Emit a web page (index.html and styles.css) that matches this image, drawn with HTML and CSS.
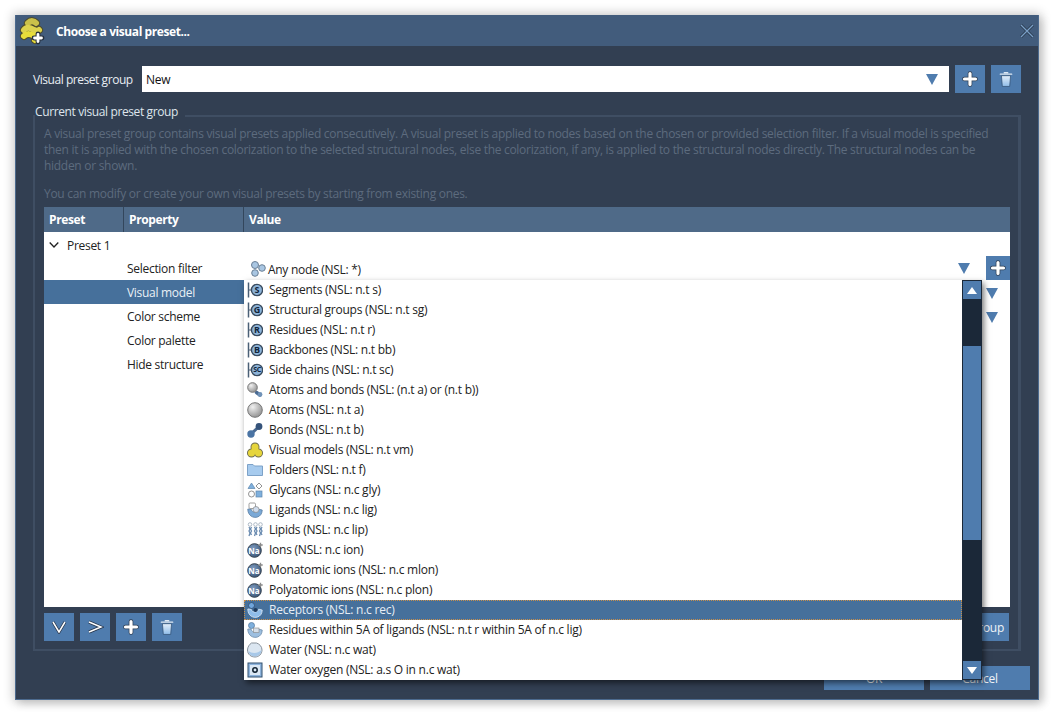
FILE: index.html
```html
<!DOCTYPE html>
<html lang="en">
<head>
<meta charset="utf-8">
<title>Choose a visual preset...</title>
<link rel="stylesheet" href="styles.css">
</head>
<body>
<svg class="defs" width="0" height="0" aria-hidden="true">
  <defs>
    <linearGradient id="trashG" x1="0" y1="0" x2="0" y2="1"><stop offset="0" stop-color="#e4effa"/><stop offset="1" stop-color="#8fbce8"/></linearGradient>
    <radialGradient id="ball" cx=".35" cy=".3" r=".8"><stop offset="0" stop-color="#f0f0f0"/><stop offset="1" stop-color="#8a8a8a"/></radialGradient>
    <radialGradient id="na" cx=".4" cy=".35" r=".8"><stop offset="0" stop-color="#7f9cc0"/><stop offset="1" stop-color="#2f4a6b"/></radialGradient>
    <symbol id="plus" viewBox="0 0 16 16"><path d="M8 2.500v11M2.500 8h11" stroke="#2d3c50" stroke-width="4.600" stroke-linecap="round"/><path d="M8 2.500v11M2.500 8h11" stroke="#fff" stroke-width="3.200" stroke-linecap="round"/></symbol>
    <symbol id="trash" viewBox="0 0 16 20"><path d="M1.500 4.500h13M6 2.800h4" stroke="#dfe9f3" stroke-width="1.500" stroke-linecap="round"/><path d="M2.800 6.200h10.400l-1 12.300H3.800z" fill="url(#trashG)" stroke="#2d4a6e" stroke-width=".8"/></symbol>
    <symbol id="ring" viewBox="0 0 16 16"><path d="M1.500 .5v15" stroke="#4a5f75" stroke-width="1.500"/><path d="M2 8h3" stroke="#4a5f75"/><circle cx="10" cy="8" r="5.600" fill="#8db3d8" stroke="#3a4c60" stroke-width="1.400"/></symbol>
    <symbol id="any" viewBox="0 0 16 16"><circle cx="5" cy="4" r="3.500" fill="#a9c6e2" stroke="#6a7f95"/><circle cx="12" cy="7" r="3.300" fill="#a9c6e2" stroke="#6a7f95"/><circle cx="5" cy="12" r="3.300" fill="#a9c6e2" stroke="#6a7f95"/></symbol>
    <symbol id="atomsbonds" viewBox="0 0 16 16"><path d="M9.500 10.500l3.500 2.500" stroke="#4a6a92" stroke-width="3.500" stroke-linecap="round"/><circle cx="5.500" cy="5.500" r="4.800" fill="url(#ball)" stroke="#777"/><circle cx="13" cy="12.500" r="2.400" fill="#7092b8"/></symbol>
    <symbol id="atom" viewBox="0 0 16 16"><circle cx="8" cy="8" r="7.300" fill="url(#ball)" stroke="#777"/></symbol>
    <symbol id="bond" viewBox="0 0 16 16"><path d="M4 12L12 4.500" stroke="#4a6a92" stroke-width="3"/><circle cx="4" cy="12" r="3.700" fill="#4a74a4"/><circle cx="12" cy="4.500" r="3.400" fill="#35537a"/></symbol>
    <symbol id="vm" viewBox="0 0 16 16"><g stroke="#6b6b50" stroke-width="1.400"><circle cx="8" cy="5" r="3.800"/><circle cx="4.500" cy="11" r="3.800"/><circle cx="11.500" cy="11" r="3.800"/></g><g fill="#e6d53c"><circle cx="8" cy="5" r="3.600"/><circle cx="4.500" cy="11" r="3.600"/><circle cx="11.500" cy="11" r="3.600"/><path d="M5 6h6l2 5H3z"/></g></symbol>
    <symbol id="folder" viewBox="0 0 16 16"><path d="M.5 2.500h5.500l1.500 1.500h8v9.500H.5z" fill="#a7cbee" stroke="#7da2c8"/></symbol>
    <symbol id="gly" viewBox="0 0 16 16"><path d="M4.500 1L8 6.500H1z" fill="#7fb0dd" stroke="#5f87ad" stroke-width=".7"/><path d="M12 1l3 3-3 3-3-3z" fill="#fff" stroke="#777" stroke-width=".8"/><circle cx="4.500" cy="12" r="3" fill="#fff" stroke="#777" stroke-width=".8"/><rect x="9" y="9" width="6" height="6" fill="#7fb0dd" stroke="#5f87ad" stroke-width=".7"/></symbol>
    <symbol id="lig" viewBox="0 0 16 16"><path d="M.8 7c0 11 14.400 11 14.400 1l-3.500-.8c-.5 3.500-7 4-7.700-.2z" fill="#7ba9d6" stroke="#5a7da2" stroke-width=".8"/><rect x="2" y="1" width="6.500" height="5.500" rx="1.200" fill="#fff" stroke="#888" stroke-width=".8"/><circle cx="9" cy="7.500" r="3" fill="#cfdced" stroke="#888" stroke-width=".7"/></symbol>
    <symbol id="lip" viewBox="0 0 16 16"><g fill="none" stroke="#a6b2c0" stroke-width=".9"><circle cx="3" cy="2.500" r="1.800"/><circle cx="8.500" cy="2.500" r="1.800"/><circle cx="13.500" cy="2.500" r="1.800"/></g><g fill="none" stroke="#6a8bb0" stroke-width="1.300"><path d="M2 5l1 2-1 2 1 2-1 3M4.500 5l-1 2 1 2-1 2 1 2"/><path d="M7.500 5l1 2-1 2 1 2-1 3M10 5l-1 2 1 2-1 2 1 2"/><path d="M12.500 5l1 2-1 2 1 2-1 3M15 5l-1 2 1 2-1 2 1 2"/></g></symbol>
    <symbol id="ion" viewBox="0 0 16 16"><circle cx="7.500" cy="8.500" r="6.800" fill="url(#na)" stroke="#33404f"/><path d="M13.500 .8v4.400M11.300 3h4.400" stroke="#8a8a8a" stroke-width="1.300"/></symbol>
    <symbol id="rec" viewBox="0 0 16 16"><path d="M.8 7c0 11 14.400 11 14.400 1l-3.500-.8c-.5 3.500-7 4-7.700-.2z" fill="#8fbdea" stroke="#dfeaf6" stroke-width=".8"/><circle cx="4.500" cy="3.500" r="3" fill="#6fa5dc" stroke="#2d4a6e" stroke-width=".8"/><circle cx="8.500" cy="8" r="2" fill="#1f3a5c"/></symbol>
    <symbol id="within" viewBox="0 0 16 16"><path d="M.8 7c0 11 14.400 11 14.400 1l-3.500-.8c-.5 3.500-7 4-7.700-.2z" fill="#9dbfe0" stroke="#6d8caa" stroke-width=".8"/><circle cx="4.500" cy="3.500" r="3" fill="#7fb0dd" stroke="#5a7da2" stroke-width=".8"/><rect x="6.500" y="6" width="5.500" height="4.500" fill="#d5dfea" stroke="#888" stroke-width=".6"/></symbol>
    <symbol id="water" viewBox="0 0 16 16"><path d="M4.500 1h5c3 1 5.500 3.500 5.500 7 0 4-3.200 7-7 7s-7.500-2.500-7.500-7C.5 5 2.500 2.200 4.500 1z" fill="#dbe6f1" stroke="#88919b"/><path d="M1.500 9c3 2.500 9 3 13 -1 0 3.500-3 6.300-6.500 6.300S1.800 12.500 1.500 9z" fill="#a8c8e8"/></symbol>
    <symbol id="oxy" viewBox="0 0 16 16"><rect x="1" y="1" width="14" height="14" fill="#8db3dc" stroke="#33516f"/><rect x="3" y="3" width="10" height="10" fill="#dbe8f5"/><circle cx="8" cy="8" r="2.200" fill="none" stroke="#10202f" stroke-width="1.500"/></symbol>
  </defs>
</svg>

<main class="window">
  <header class="titlebar">
    <svg class="logo" viewBox="0 0 28 28" aria-hidden="true">
      <g fill="none" stroke-linecap="round">
        <path d="M10 6c3-3 6-2 8 0" stroke="#4d4b2c" stroke-width="8"/>
        <path d="M6 13c3-4 7-2 10 0 2 1 4 1 5 0" stroke="#4d4b2c" stroke-width="8"/>
        <path d="M6 19c3-3 7-2 10 0 2 1 2 3 1 4" stroke="#4d4b2c" stroke-width="8"/>
        <path d="M10 6c3-3 6-2 8 0" stroke="#c9c04a" stroke-width="6"/>
        <path d="M6 13c3-4 7-2 10 0 2 1 4 1 5 0" stroke="#dcd24e" stroke-width="6"/>
        <path d="M6 19c3-3 7-2 10 0 2 1 2 3 1 4" stroke="#e8dd3a" stroke-width="6"/>
        <path d="M20 17v8M16 21h8" stroke="#26303e" stroke-width="4.800"/>
        <path d="M20 17.500v7M16.500 21h7" stroke="#fff" stroke-width="2.800"/>
      </g>
    </svg>
    <h1 class="title">Choose a visual preset...</h1>
    <svg class="close" viewBox="0 0 14 14" aria-hidden="true"><path d="M1 1l12 12M13 1L1 13" stroke="#263548" stroke-width="2.800"/><path d="M1 1l12 12M13 1L1 13" stroke="#7aa0c8" stroke-width="1.400"/></svg>
  </header>

  <div class="body">
    <div class="group-row">
      <span class="group-label">Visual preset group</span>
      <div class="combo"><span>New</span><i class="arrow"></i></div>
      <button class="btn icon-btn"><svg class="ic-plus"><use href="#plus"/></svg></button>
      <button class="btn icon-btn"><svg class="ic-trash"><use href="#trash"/></svg></button>
    </div>

    <fieldset class="panel">
      <legend>Current visual preset group</legend>
      <div class="desc">
        <p>A visual preset group contains visual presets applied consecutively. A visual preset is applied to nodes based on the chosen or provided selection filter. If a visual model is specified<br>then it is applied with the chosen colorization to the selected structural nodes, else the colorization, if any, is applied to the structural nodes directly. The structural nodes can be<br>hidden or shown.</p>
        <p>You can modify or create your own visual presets by starting from existing ones.</p>
      </div>

      <div class="table">
        <div class="thead">
          <div class="th col-preset">Preset</div>
          <div class="th col-prop">Property</div>
          <div class="th col-val">Value</div>
        </div>
        <div class="tbody">
          <div class="tree-row"><svg class="chev" viewBox="0 0 10 6"><path d="M.7 .5l4.300 4.500 4.300-4.500" fill="none" stroke="#222" stroke-width="1.300"/></svg>Preset 1</div>
          <div class="prop-row first">
            <span class="prop">Selection filter</span>
            <span class="val"><svg class="ico any-ico"><use href="#any"/></svg>Any node (NSL: *)</span>
            <i class="arrow"></i>
            <button class="btn add-small"><svg class="ic-plus"><use href="#plus"/></svg></button>
          </div>
          <div class="prop-row"><span class="prop selected">Visual model</span><span class="val"></span><i class="arrow side"></i></div>
          <div class="prop-row"><span class="prop">Color scheme</span><span class="val"></span><i class="arrow side"></i></div>
          <div class="prop-row"><span class="prop">Color palette</span></div>
          <div class="prop-row"><span class="prop">Hide structure</span></div>
        </div>
      </div>

      <div class="toolbar">
        <button class="btn icon-btn"><svg class="ic-chev" viewBox="0 0 18 14"><path d="M3 2l6 10 6-10" fill="none" stroke="#26354a" stroke-width="3"/><path d="M3 2l6 10 6-10" fill="none" stroke="#fff" stroke-width="1.500"/></svg></button>
        <button class="btn icon-btn"><svg class="ic-chev" viewBox="0 0 18 14"><path d="M3 2l12 5-12 5" fill="none" stroke="#26354a" stroke-width="3"/><path d="M3 2l12 5-12 5" fill="none" stroke="#fff" stroke-width="1.500"/></svg></button>
        <button class="btn icon-btn"><svg class="ic-plus"><use href="#plus"/></svg></button>
        <button class="btn icon-btn"><svg class="ic-trash"><use href="#trash"/></svg></button>
        <button class="btn save-btn">Save as visual preset group</button>
      </div>
    </fieldset>

    <div class="actions">
      <button class="btn action">OK</button>
      <button class="btn action">Cancel</button>
    </div>
  </div>
</main>

<div class="popup">
  <ul class="list">
    <li><svg class="ico"><use href="#ring"/></svg><b class="glyph">S</b>Segments (NSL: n.t s)</li>
    <li><svg class="ico"><use href="#ring"/></svg><b class="glyph">G</b>Structural groups (NSL: n.t sg)</li>
    <li><svg class="ico"><use href="#ring"/></svg><b class="glyph">R</b>Residues (NSL: n.t r)</li>
    <li><svg class="ico"><use href="#ring"/></svg><b class="glyph">B</b>Backbones (NSL: n.t bb)</li>
    <li><svg class="ico"><use href="#ring"/></svg><b class="glyph sc">SC</b>Side chains (NSL: n.t sc)</li>
    <li><svg class="ico"><use href="#atomsbonds"/></svg>Atoms and bonds (NSL: (n.t a) or (n.t b))</li>
    <li><svg class="ico"><use href="#atom"/></svg>Atoms (NSL: n.t a)</li>
    <li><svg class="ico"><use href="#bond"/></svg>Bonds (NSL: n.t b)</li>
    <li><svg class="ico"><use href="#vm"/></svg>Visual models (NSL: n.t vm)</li>
    <li><svg class="ico"><use href="#folder"/></svg>Folders (NSL: n.t f)</li>
    <li><svg class="ico"><use href="#gly"/></svg>Glycans (NSL: n.c gly)</li>
    <li><svg class="ico"><use href="#lig"/></svg>Ligands (NSL: n.c lig)</li>
    <li><svg class="ico"><use href="#lip"/></svg>Lipids (NSL: n.c lip)</li>
    <li><svg class="ico"><use href="#ion"/></svg><b class="glyph na">Na</b>Ions (NSL: n.c ion)</li>
    <li><svg class="ico"><use href="#ion"/></svg><b class="glyph na">Na</b>Monatomic ions (NSL: n.c mlon)</li>
    <li><svg class="ico"><use href="#ion"/></svg><b class="glyph na">Na</b>Polyatomic ions (NSL: n.c plon)</li>
    <li class="current"><svg class="ico"><use href="#rec"/></svg>Receptors (NSL: n.c rec)</li>
    <li><svg class="ico"><use href="#within"/></svg>Residues within 5A of ligands (NSL: n.t r within 5A of n.c lig)</li>
    <li><svg class="ico"><use href="#water"/></svg>Water (NSL: n.c wat)</li>
    <li><svg class="ico"><use href="#oxy"/></svg>Water oxygen (NSL: a.s O in n.c wat)</li>
  </ul>
  <div class="scrollbar">
    <div class="sb-btn"><i class="tri up"></i></div>
    <div class="sb-track"><div class="sb-thumb"></div></div>
    <div class="sb-btn"><i class="tri down"></i></div>
  </div>
</div>
</body>
</html>
```

FILE: styles.css
```css
* { box-sizing: border-box; }
html, body { margin: 0; height: 100%; }
body {
  background: #fff;
  font-family: "Open Sans", "Noto Sans", sans-serif;
  font-size: 12px;
  letter-spacing: -0.29px;
  overflow: hidden;
  padding: 15px;
}
.defs { position: absolute; }

.window {
  width: 1024px;
  height: 685px;
  background: #323f52;
  border: 1px solid #4c6a8e;
  border-top: 0;
  box-shadow: 0 0 10px 2px rgba(0, 0, 0, .2), 4px 4px 8px rgba(0, 0, 0, .12);
  display: flex;
  flex-direction: column;
}

.titlebar {
  height: 31px;
  background: #425c7c;
  display: flex;
  align-items: center;
  padding: 0 3px 0 2px;
  flex: none;
}
.logo { width: 28px; height: 28px; flex: none; }
.title { margin: 1px 0 0 10px; font-size: 12px; font-weight: 700; color: #fff; flex: 1; letter-spacing: -0.42px; }
.close { width: 14px; height: 14px; margin-right: 1px; }

.body {
  flex: 1;
  display: flex;
  flex-direction: column;
  padding: 19px 8px 8px 17px;
  min-height: 0;
}

.group-row { display: flex; align-items: center; height: 28px; flex: none; }
.group-label { color: #e8edf3; width: 109px; flex: none; padding-top: 1px; letter-spacing: -0.45px; }
.combo {
  width: 807px;
  height: 26px;
  background: #fff;
  color: #111;
  display: flex;
  align-items: center;
  justify-content: space-between;
  padding: 0 11px 0 4px;
  margin-right: 6px;
}
.arrow {
  display: block;
  width: 0;
  height: 0;
  flex: none;
  border-left: 6px solid transparent;
  border-right: 6px solid transparent;
  border-top: 11px solid #4f7cae;
}

.btn {
  border: 0;
  padding: 0;
  margin: 0;
  background: #4f7cae;
  color: #eef3f8;
  font: inherit;
  letter-spacing: inherit;
  display: flex;
  align-items: center;
  justify-content: center;
}
.icon-btn { width: 30px; height: 28px; flex: none; }
.icon-btn + .icon-btn { margin-left: 6px; }
.ic-plus { width: 16px; height: 16px; }
.ic-trash { width: 14px; height: 18px; }
.ic-chev { width: 18px; height: 14px; }

.panel {
  margin: 12px 0 0;
  padding: 0 9px;
  width: 988px;
  height: 546px;
  border: 2px solid #3f4e63;
  border-right-width: 3px;
  min-width: 0;
  flex: none;
}
.panel legend {
  padding: 0 7px 8px 0;
  margin-left: -9px;
  color: #dfe5ec;
  height: 22px;
  line-height: 14px;
  letter-spacing: -0.38px;
}

.desc { color: #5d6b7e; line-height: 16px; height: 81px; margin-top: -1px; }
.desc p { margin: 0 0 12px; }

.table { width: 966px; }
.thead { display: flex; height: 25px; background: #4f6a88; }
.th { color: #fff; font-weight: 700; padding: 4px 5px 0; border-right: 1px solid #33465c; line-height: 17px; letter-spacing: -0.38px; }
.col-preset { width: 80px; }
.col-prop { width: 120px; }
.col-val { flex: 1; border-right: 0; }

.tbody { background: #fff; height: 375px; color: #222; }
.tree-row { height: 24px; display: flex; align-items: center; padding: 2px 0 0 5px; gap: 8px; }
.chev { width: 10px; height: 6px; }
.prop-row { height: 24px; display: flex; align-items: center; }
.prop { width: 200px; height: 24px; line-height: 26px; padding-left: 83px; flex: none; }
.prop.selected { background: #46709b; color: #eaf0f6; }
.val { flex: 1; display: flex; align-items: center; padding: 2px 0 0 6px; }
.first .val .ico { margin-right: 2px; }
.first .arrow { margin-right: 16px; }
.add-small { width: 24px; height: 24px; flex: none; }
.arrow.side { margin: 2px 12px 0 0; }

.toolbar { display: flex; margin-top: 6px; height: 28px; }
.save-btn { margin-left: auto; padding: 0 5px; width: 180px; height: 28px; white-space: nowrap; justify-content: flex-end; }

.actions { display: flex; justify-content: flex-end; gap: 6px; margin-top: 15px; }
.action { width: 100px; height: 24px; }

/* Drop-down list lying over the dialog */
.popup {
  position: absolute;
  left: 244px;
  top: 280px;
  width: 738px;
  height: 400px;
  display: flex;
  background: #fff;
  box-shadow: 2px 3px 6px rgba(0, 0, 0, .55);
}
.list { list-style: none; margin: 0; padding: 0; flex: 1; color: #222; letter-spacing: -0.24px; }
.list li { height: 20px; display: flex; align-items: center; padding-left: 25px; position: relative; line-height: 20px; white-space: nowrap; }
.list li .ico { position: absolute; left: 3px; top: 2px; }
.ico { width: 16px; height: 16px; flex: none; }
.glyph {
  position: absolute;
  left: 6px;
  top: 3px;
  width: 14px;
  height: 14px;
  text-align: center;
  font-size: 9px;
  line-height: 14px;
  color: #10243a;
  letter-spacing: 0;
}
.glyph.sc { font-size: 7px; letter-spacing: -0.3px; }
.glyph.na { left: 3px; top: 4px; color: #fff; font-size: 8px; }
.list li.current { background: #46709b; color: #e8eef5; outline: 1px dotted #c98f4a; outline-offset: -1px; }

.scrollbar { width: 20px; background: #1b2838; display: flex; flex-direction: column; padding: 1px; }
.sb-btn { height: 18px; background: #4f7cae; display: flex; align-items: center; justify-content: center; flex: none; }
.sb-track { flex: 1; padding-top: 47px; }
.sb-thumb { height: 194px; background: #4f7cae; }
.tri { width: 0; height: 0; border-left: 5px solid transparent; border-right: 5px solid transparent; }
.tri.up { border-bottom: 7px solid #fff; }
.tri.down { border-top: 7px solid #fff; }
```
